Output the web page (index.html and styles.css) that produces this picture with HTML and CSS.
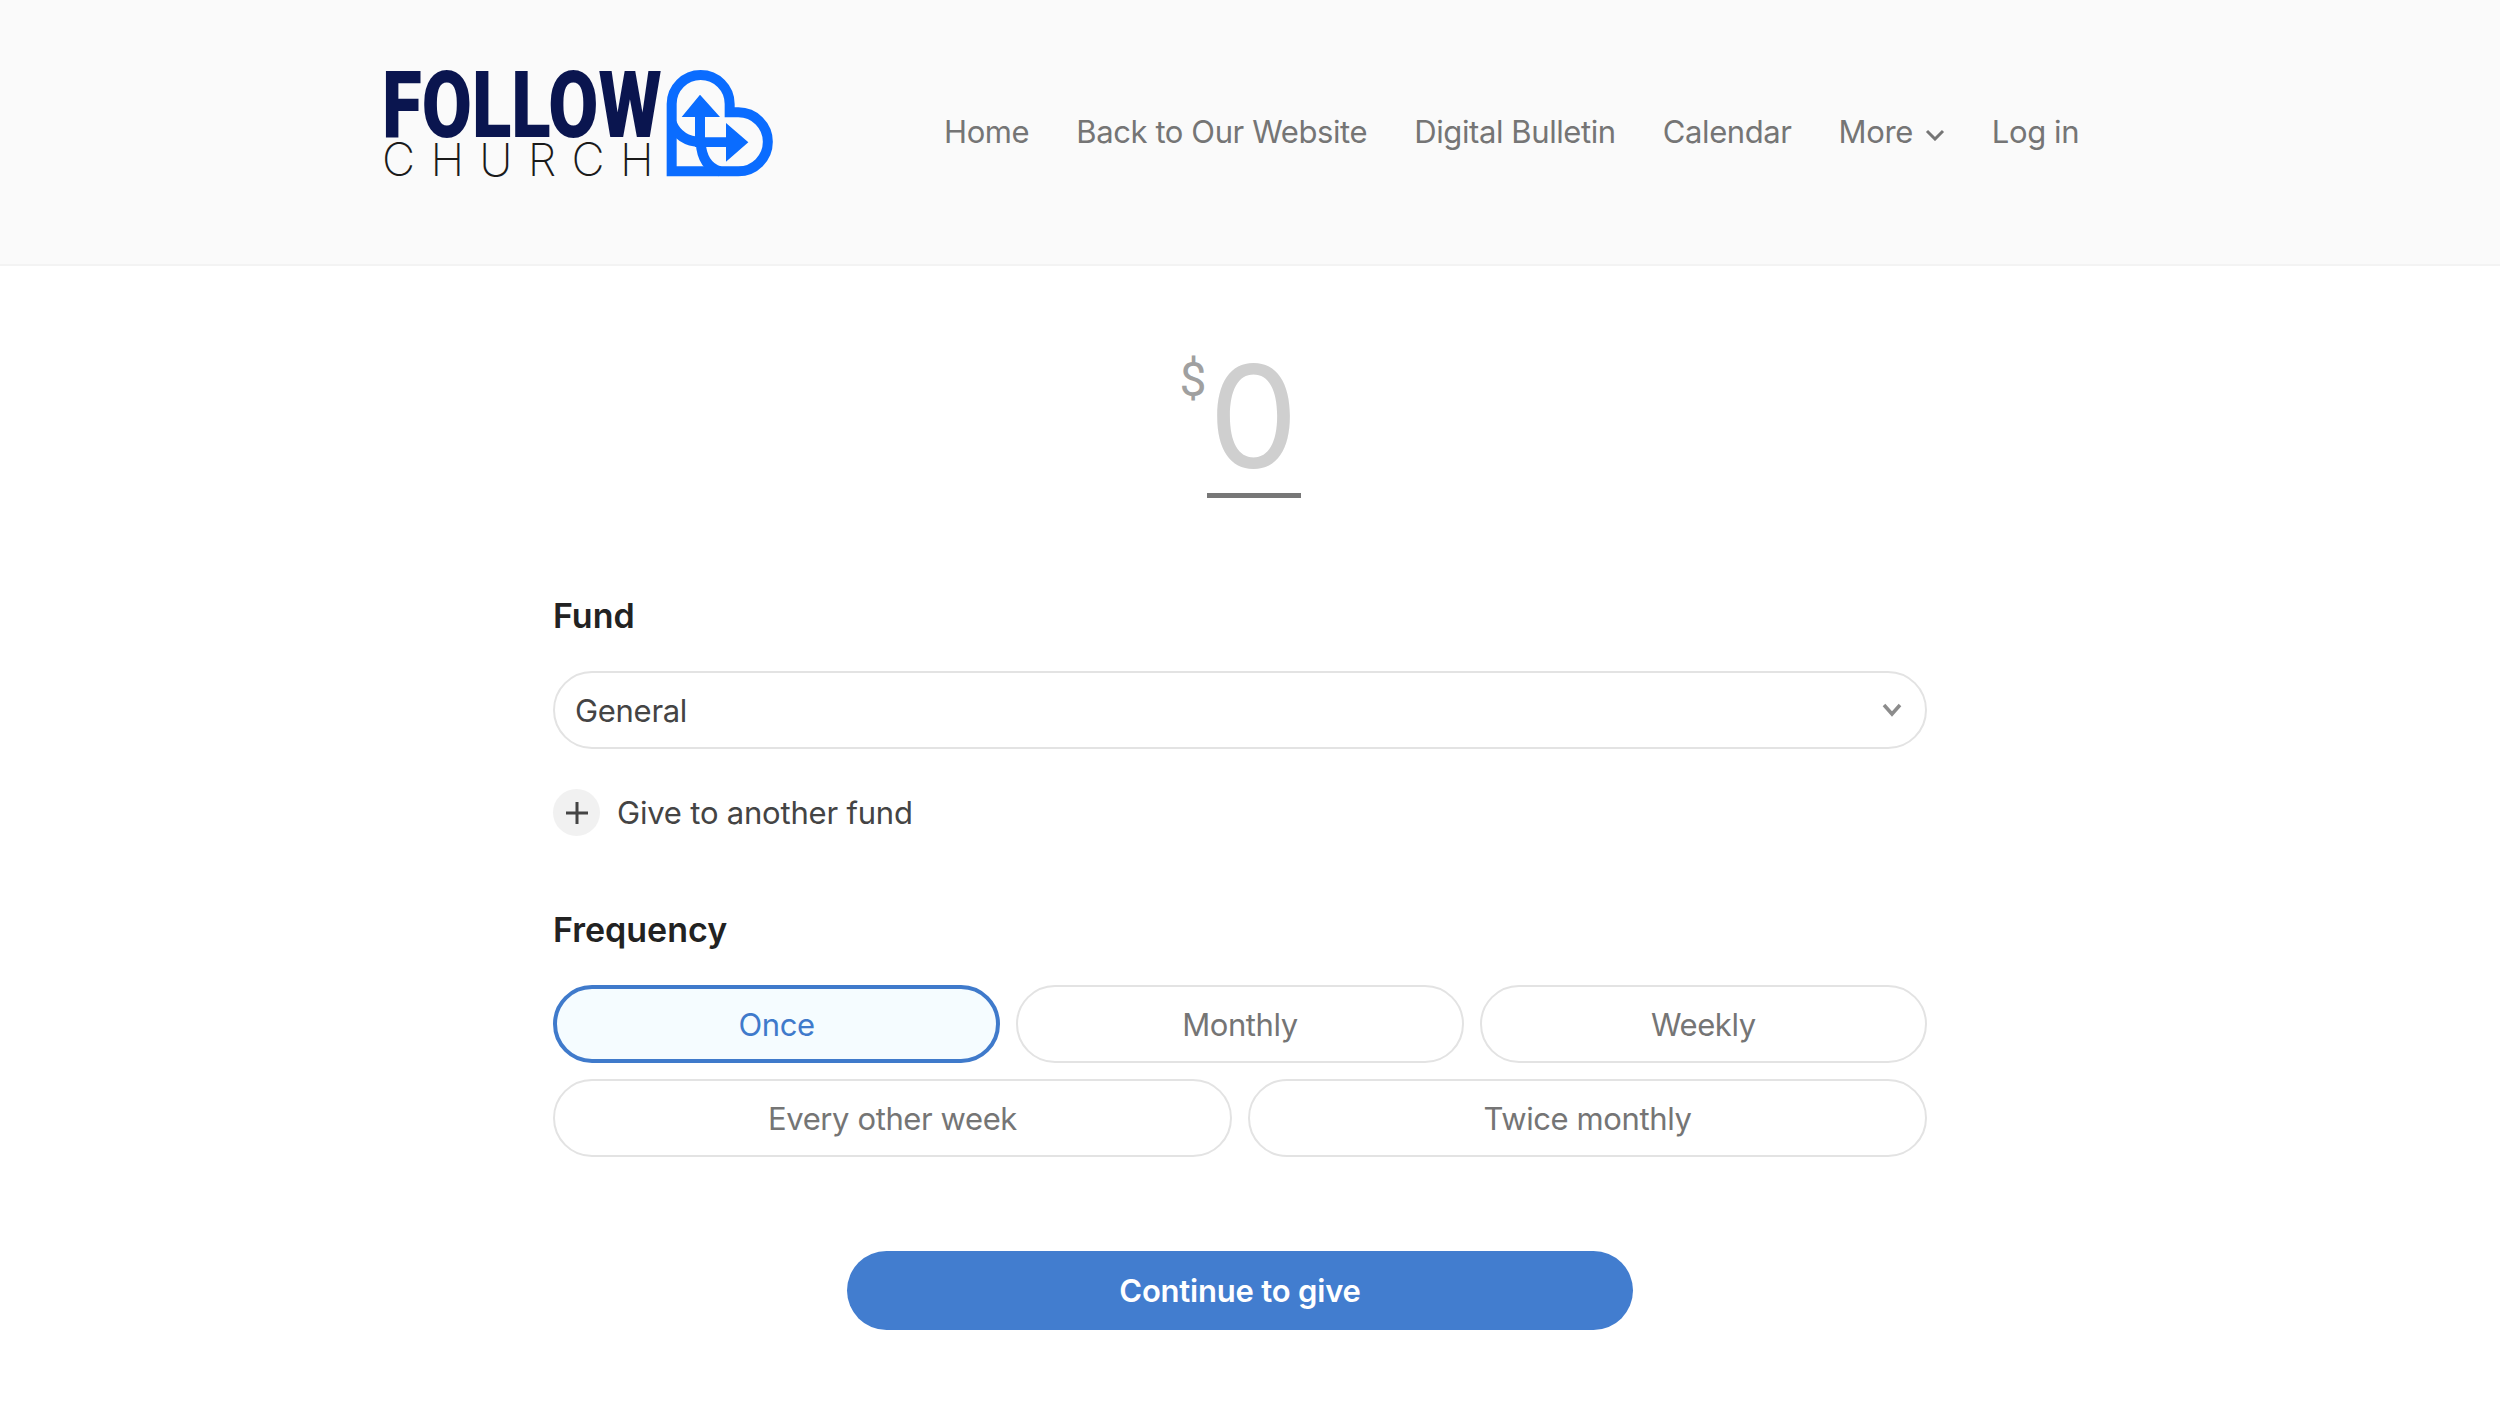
FILE: index.html
```html
<!DOCTYPE html>
<html lang="en">
<head>
  <meta charset="UTF-8">
  <meta name="viewport" content="width=device-width, initial-scale=1.0">
  <title>Give</title>
  <link rel="stylesheet" href="styles.css">
</head>
<body>

<div class="topbar">
  <svg class="logo" viewBox="75 85 1170 330" width="390" height="110" role="img" aria-label="Follow Church">
    <text class="logo-follow" x="66" y="292" textLength="839" lengthAdjust="spacingAndGlyphs">FOLLOW</text>
    <text class="logo-church" x="66" y="408" textLength="815" lengthAdjust="spacing">CHURCH</text>
    <g class="logo-lines">
      <path d="M935 395V193A87 87 0 0 1 1109 193V218H1135A88.500 88.500 0 0 1 1135 395Z"/>
      <path d="M935 250Q958 305 1022 307"/>
      <path d="M1022 307Q1026 380 1080 395"/>
    </g>
    <g class="logo-arrows">
      <path d="M1020 165L1080 232H1035V293H1098V250L1165 308L1098 366V322H1005V232H965Z"/>
    </g>
  </svg>
  <div class="topnav">
    <a href="#">Home</a>
    <a href="#">Back to Our Website</a>
    <a href="#">Digital Bulletin</a>
    <a href="#">Calendar</a>
    <a class="more" href="#">More
      <svg viewBox="0 0 20 12" width="20" height="12"><path d="M2 2l8 8 8-8"/></svg>
    </a>
    <a href="#">Log in</a>
  </div>
</div>

<div class="give-form">
  <div class="amount">
    <span class="amount-currency">$</span>
    <span class="amount-value">0</span>
  </div>

  <div class="field-label fund-label">Fund</div>
  <div class="fund-select">
    <span>General</span>
    <svg viewBox="0 0 20 14" width="20" height="14"><path d="M2 2l8 9 8-9"/></svg>
  </div>
  <div class="add-fund">
    <span class="add-fund-icon">
      <svg viewBox="0 0 24 24" width="24" height="24"><path d="M12 1v22M1 12h22"/></svg>
    </span>
    Give to another fund
  </div>

  <div class="field-label frequency-label">Frequency</div>
  <div class="frequency">
    <div class="freq-btn third active">Once</div>
    <div class="freq-btn third">Monthly</div>
    <div class="freq-btn third">Weekly</div>
    <div class="freq-btn half">Every other week</div>
    <div class="freq-btn half">Twice monthly</div>
  </div>

  <div class="continue-row">
    <button class="continue-btn">Continue to give</button>
  </div>
</div>

</body>
</html>
```

FILE: styles.css
```css
body {
  margin: 0;
  padding: 0;
  font-family: Inter, "Open Sans", sans-serif;
  color: #757575;
  background-color: #fff;
}

.topbar {
  display: flex;
  align-items: center;
  height: 264px;
  padding-left: 385px;
  background-color: #fafafa;
  border-bottom: 2px solid #f3f3f3;
}

.logo {
  display: block;
  margin-top: -18px;
  margin-right: 169px;
  overflow: visible;
}

.logo-follow {
  font-family: Roboto, sans-serif;
  font-weight: 900;
  font-size: 276px;
  fill: #0a154f;
}

.logo-church {
  font-family: Inter, sans-serif;
  font-weight: 200;
  font-size: 137px;
  fill: #1a1a1a;
}

.logo-lines path {
  fill: none;
  stroke: #0a6cff;
  stroke-width: 30;
}

.logo-arrows path {
  fill: #0a6cff;
}

.topnav {
  display: flex;
  align-items: center;
  gap: 47px;
}

.topnav a {
  color: #757575;
  text-decoration: none;
  font-size: 31px;
  letter-spacing: -0.4px;
  line-height: 40px;
}

.topnav .more {
  display: flex;
  align-items: center;
  gap: 12px;
}

.topnav .more svg {
  margin-top: 6px;
}

.topnav .more path {
  fill: none;
  stroke: #757575;
  stroke-width: 3;
}

.give-form {
  width: 1374px;
  margin-left: 553px;
}

.amount {
  display: flex;
  justify-content: center;
  align-items: flex-start;
  gap: 4px;
  padding-top: 84px;
}

.amount-currency {
  font-family: Roboto, sans-serif;
  font-size: 48px;
  line-height: 54px;
  margin-top: 3px;
  color: #a0a0a0;
  width: 23px;
}

.amount-value {
  width: 94px;
  height: 143px;
  text-align: center;
  font-family: Inter, sans-serif;
  font-size: 142px;
  font-weight: 400;
  line-height: 132px;
  color: #cfcfcf;
  border-bottom: 5px solid #777;
}

.field-label {
  font-size: 34px;
  font-weight: 600;
  line-height: 40px;
  color: #222;
}

.fund-label {
  margin-top: 98px;
}

.fund-select {
  display: flex;
  justify-content: space-between;
  align-items: center;
  box-sizing: border-box;
  height: 78px;
  margin-top: 35px;
  padding: 0 23px 0 20px;
  border: 2px solid #e3e3e3;
  border-radius: 39px;
  font-size: 31px;
  letter-spacing: -0.3px;
  color: #444;
}

.fund-select path {
  fill: none;
  stroke: #8c8c8c;
  stroke-width: 3.500;
}

.add-fund {
  display: flex;
  align-items: center;
  gap: 17px;
  margin-top: 40px;
  font-size: 31px;
  letter-spacing: -0.2px;
  color: #444;
}

.add-fund-icon {
  display: flex;
  justify-content: center;
  align-items: center;
  width: 47px;
  height: 47px;
  border-radius: 50%;
  background-color: #f1f1f1;
}

.add-fund-icon path {
  fill: none;
  stroke: #444;
  stroke-width: 3;
}

.frequency-label {
  margin-top: 74px;
}

.frequency {
  display: grid;
  grid-template-columns: repeat(6, 1fr);
  gap: 16px;
  margin-top: 35px;
}

.freq-btn {
  display: flex;
  justify-content: center;
  align-items: center;
  box-sizing: border-box;
  height: 78px;
  border: 2px solid #e3e3e3;
  border-radius: 39px;
  font-size: 31px;
  letter-spacing: -0.4px;
  color: #757575;
}

.freq-btn.third {
  grid-column: span 2;
}

.freq-btn.half {
  grid-column: span 3;
}

.freq-btn.active {
  border: 4px solid #3f7acb;
  background-color: #f5fcff;
  color: #3f7acb;
}

.continue-row {
  display: flex;
  justify-content: center;
  margin-top: 94px;
}

.continue-btn {
  width: 786px;
  height: 79px;
  border: none;
  border-radius: 40px;
  background-color: #427dcf;
  color: #fff;
  font-family: Inter, sans-serif;
  font-size: 31px;
  font-weight: 600;
  letter-spacing: -0.2px;
  cursor: pointer;
}
```
